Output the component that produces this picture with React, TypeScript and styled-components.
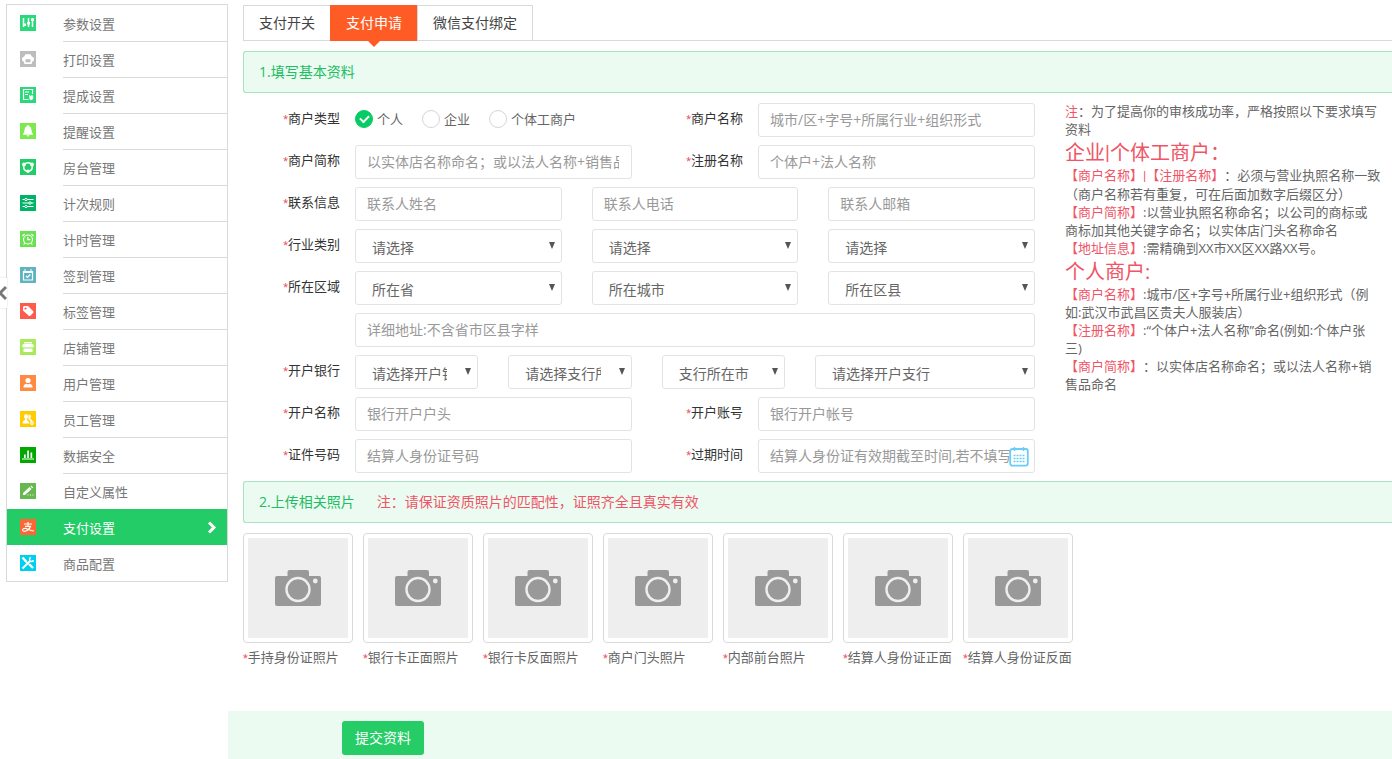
import React, { useState } from "react";
import styled, { createGlobalStyle, css } from "styled-components";

const green = "#23cc66";
const red = "#ef5566";
const line = "#d9d9d9";
const mint = "#ebfbf1";

const GlobalStyle = createGlobalStyle`
  *, *::before, *::after { box-sizing: border-box; }
  body {
    margin: 0;
    background: #fff;
    color: #666;
    font: 13px/18px "Open Sans", "Noto Sans CJK SC", sans-serif;
    text-spacing-trim: space-all;
    text-autospace: no-autospace;
    overflow-x: hidden;
  }
  input, select, button { font-family: inherit; }
`;

const Page = styled.div`
  display: flex;
  min-height: 100vh;
`;

/* ---------- sidebar ---------- */

const Sidebar = styled.nav`
  flex: none;
  width: 222px;
  margin: 4px 0 0 6px;
  align-self: flex-start;
  border: 1px solid ${line};
`;

const MenuList = styled.ul`
  margin: 0;
  padding: 0;
  list-style: none;
`;

const MenuText = styled.span<{ $ruled: boolean }>`
  flex: 1;
  height: 36px;
  padding-top: 9px;
  border-top: 1px solid ${(p) => (p.$ruled ? line : "transparent")};
`;

const MenuLink = styled.a<{ $active: boolean }>`
  position: relative;
  display: flex;
  gap: 27px;
  height: 36px;
  padding-left: 13px;
  color: #777;
  text-decoration: none;
  ${(p) =>
    p.$active &&
    css`
      background: ${green};
      color: #fff;
    `}
  > svg:first-child {
    flex: none;
    margin-top: 10px;
  }
`;

const ActiveMark = styled.svg`
  flex: none;
  margin: 12px 10px 0 0;
`;

const Collapse = styled.button`
  position: fixed;
  left: -10px;
  top: 278px;
  width: 17px;
  height: 30px;
  padding: 0;
  border: 0;
  background: #fff;
  box-shadow: 0 0 2px rgba(0, 0, 0, 0.15);
  svg {
    display: block;
    margin: 0 0 0 8px;
  }
`;

/* ---------- main column ---------- */

const Main = styled.main`
  flex: 1;
  min-width: 0;
  display: flex;
  flex-direction: column;
`;

const Content = styled.div`
  padding: 5px 0 0 15px;
`;

const Tabs = styled.div`
  display: flex;
  height: 36px;
  margin-bottom: 10px;
  border-bottom: 1px solid ${line};
`;

const Tab = styled.button<{ $active: boolean }>`
  position: relative;
  height: 36px;
  padding: 0 15px 2px;
  border: 1px solid ${line};
  border-right-width: 0;
  background: #fff;
  color: #444;
  font-size: 14px;
  &:last-child {
    border-right-width: 1px;
  }
  ${(p) =>
    p.$active &&
    css`
      border-color: #ff5c25;
      background: #ff5c25;
      color: #fff;
      &::after {
        content: "";
        position: absolute;
        top: 100%;
        left: 50%;
        margin-left: -7px;
        border: 7px solid transparent;
        border-top-color: #ff5c25;
        border-bottom-width: 0;
      }
    `}
`;

const SectionBar = styled.h2`
  display: flex;
  align-items: center;
  gap: 22px;
  height: 42px;
  margin: 0;
  padding-left: 15px;
  border: 1px solid #a9e3c0;
  border-right: 0;
  border-radius: 3px 0 0 3px;
  background: ${mint};
  color: #22bd62;
  font-size: 14px;
  font-weight: 400;
`;

const Red = styled.span`
  color: ${red};
`;

const Star = styled.span`
  color: ${red};
  font-family: Roboto, sans-serif;
  font-size: 11px;
  line-height: 1;
`;

const Apply = styled.div`
  display: grid;
  grid-template-columns: 792fr 327fr;
  gap: 30px;
  margin-top: 10px;
`;

/* ---------- form ---------- */

const Form = styled.form`
  min-width: 0;
`;

const Row = styled.div`
  display: flex;
  gap: 15px;
  margin-bottom: 8px;
`;

const Label = styled.label<{ $width: number }>`
  flex: none;
  width: ${(p) => p.$width}px;
  height: 34px;
  color: #333;
  line-height: 31px;
  text-align: right;
`;

const Fields = styled.div<{ $columns: string; $gap?: number }>`
  flex: 1;
  min-width: 0;
  display: grid;
  grid-template-columns: ${(p) => p.$columns};
  gap: ${(p) => p.$gap ?? 30}px;
`;

const control = css`
  display: block;
  width: 100%;
  min-width: 0;
  height: 34px;
  border: 1px solid #e3e3e3;
  border-radius: 3px;
  background: #fff;
  color: #666;
  font-size: 14px;
`;

const TextInput = styled.input`
  ${control}
  padding: 0 12px 2px 11px;
  &::placeholder {
    color: #999;
    opacity: 1;
  }
`;

const SelectBox = styled.div`
  position: relative;
  min-width: 0;
  svg {
    position: absolute;
    top: 13px;
    right: 7px;
    pointer-events: none;
  }
`;

const Select = styled.select`
  ${control}
  appearance: none;
  padding: 2px 30px 0 16px;
`;

const DateBox = styled.div`
  position: relative;
  min-width: 0;
  svg {
    position: absolute;
    top: 7px;
    right: 6px;
    pointer-events: none;
  }
`;

const RadioGroup = styled.div`
  display: flex;
  align-items: center;
  gap: 19px;
  height: 32px;
`;

const RadioLabel = styled.label`
  display: flex;
  align-items: center;
  gap: 4px;
  white-space: nowrap;
`;

const Radio = styled.input`
  position: relative;
  appearance: none;
  width: 18px;
  height: 18px;
  margin: 0;
  border: 1px solid #d6d6d6;
  border-radius: 50%;
  background: #fff;
  &:checked {
    border-color: #07cc66;
    background: #07cc66;
  }
  &:checked::after {
    content: "";
    position: absolute;
    left: 4px;
    top: 4px;
    width: 9px;
    height: 6px;
    border: solid #fff;
    border-width: 0 0 2px 2px;
    transform: rotate(-45deg);
  }
`;

/* ---------- notes ---------- */

const Notes = styled.aside`
  margin-top: -1px;
  padding-right: 11px;
`;

const NoteText = styled.p`
  margin: 0;
`;

const NoteTitle = styled.h3`
  margin: 0;
  padding-top: 2px;
  color: ${red};
  font-size: 20px;
  font-weight: 400;
  line-height: 26px;
`;

const Pipe = styled.span`
  font-family: Roboto, sans-serif;
`;

/* ---------- uploads ---------- */

const Uploads = styled.div`
  display: flex;
  flex-wrap: wrap;
  gap: 10px;
  padding: 10px 0 45px;
`;

const Upload = styled.label`
  width: 110px;
  white-space: nowrap;
`;

const Thumb = styled.span`
  display: flex;
  height: 110px;
  margin-bottom: 5px;
  padding: 4px;
  border: 1px solid ${line};
  border-radius: 4px;
`;

const ThumbFill = styled.span`
  flex: 1;
  display: flex;
  align-items: center;
  justify-content: center;
  background: #eee;
`;

const FileInput = styled.input`
  position: absolute;
  width: 1px;
  height: 1px;
  opacity: 0;
`;

const Footer = styled.footer`
  margin-top: auto;
  padding: 10px 0 4px 114px;
  background: ${mint};
`;

const Submit = styled.button`
  display: block;
  height: 34px;
  padding: 0 13px 2px;
  border: 0;
  border-radius: 3px;
  background: #26cc66;
  color: #fff;
  font-size: 14px;
`;

/* ---------- icons ---------- */

const stroke = { fill: "none", stroke: "#fff", strokeWidth: 1.2 };

const MENU: { text: string; color: string; glyph: React.ReactNode }[] = [
  {
    text: "参数设置",
    color: "#2ad979",
    glyph: (
      <>
        <path d="M3.500 3v9M8.500 3v9M12.500 3v9" {...stroke} strokeWidth="1.500" />
        <path d="M3 8.500h3v2.500H3zM7 7h3v2.500H7zM11 3.500h3v2.500h-3z" fill="#fff" />
      </>
    ),
  },
  {
    text: "打印设置",
    color: "#bdbdbd",
    glyph: (
      <path fillRule="evenodd" d="M5.500 3.300h5l1.500 2.400q2 .3 2 1.800v1.500q0 1-1.500 1.300L12 12q-.2 1-1 1H5q-.8 0-1-1l-.5-1.700Q2 10 2 9V7.500Q2 6 4 5.700zM5.500 8.300v3h5v-3z" fill="#fff" />
    ),
  },
  {
    text: "提成设置",
    color: "#2ad979",
    glyph: (
      <>
        <path d="M8.500 12.500H3.500v-10h9V7M5 5h4M5 7.500h3" {...stroke} />
        <path d="M9 7.500l1.500 1.500L12 8l1.200 1v3l-2.200 1.300L9.500 12z" fill="#fff" />
      </>
    ),
  },
  {
    text: "提醒设置",
    color: "#7ee84f",
    glyph: (
      <path d="M8 2q.9 0 1 1Q11.500 4 11.500 7q0 2.500 1.500 4v.8H3V11q1.500-1.500 1.500-4Q4.500 4 7 3q.1-1 1-1zM6.600 12.300h2.800q-.3 1.300-1.400 1.300t-1.400-1.300z" fill="#fff" />
    ),
  },
  {
    text: "房台管理",
    color: "#22cc66",
    glyph: (
      <>
        <circle cx="8" cy="8" r="4.300" fill="none" stroke="#fff" strokeWidth="1.600" strokeDasharray="7 2" strokeDashoffset="2" />
        <circle cx="4" cy="5.500" r="1.900" fill="#fff" />
        <circle cx="12" cy="5.500" r="1.900" fill="#fff" />
        <circle cx="8" cy="12.300" r="1.800" fill="#fff" />
      </>
    ),
  },
  {
    text: "计次规则",
    color: "#00b366",
    glyph: (
      <>
        <path d="M2.500 4.500H13.500M2.500 8H13.500M2.500 11.500H13.500" {...stroke} />
        <g fill="#00b366" stroke="#fff">
          <circle cx="6" cy="4.500" r="1.200" />
          <circle cx="10" cy="8" r="1.200" />
          <circle cx="6" cy="11.500" r="1.200" />
        </g>
      </>
    ),
  },
  {
    text: "计时管理",
    color: "#6be052",
    glyph: (
      <>
        <circle cx="8" cy="8.500" r="4.500" {...stroke} />
        <path d="M7.800 6v2.700h2.500M2.500 5l2.200-2.200M13.500 5l-2.200-2.200M4.700 12.200l-1 1.300M11.300 12.200l1 1.300" {...stroke} />
      </>
    ),
  },
  {
    text: "签到管理",
    color: "#5fb3c3",
    glyph: (
      <>
        <path d="M3.500 4.500h9v8.500h-9z" {...stroke} />
        <path d="M3 4h10v2H3zM4.500 2h1v3h-1zM10.500 2h1v3h-1z" fill="#fff" />
        <path d="M6 9l1.500 1.500L10.300 7.500" {...stroke} />
      </>
    ),
  },
  {
    text: "标签管理",
    color: "#ff5b4c",
    glyph: <path fillRule="evenodd" d="M3 4l1-1h4l5 5q1 1 0 2l-2.500 2.500q-1 1-2 0L3 7.500zM5.500 4.400a1.100 1.100 0 1 0 .01 0z" fill="#fff" />,
  },
  {
    text: "店铺管理",
    color: "#a9ea5c",
    glyph: <path d="M4 3h8v1.500H4zM3 5h10l1 2.500q-1 1.500-2 .5-1 1-2 0-1 1-2 0-1 1-2 0-1 1-2 0-1 1-2-.5zM3.500 9.500h9v3.500h-9z" fill="#fff" />,
  },
  {
    text: "用户管理",
    color: "#ff8a42",
    glyph: (
      <>
        <circle cx="8" cy="5.500" r="2.600" fill="#fff" />
        <path d="M3.500 12.500v-1.500Q4 9 6.500 8.700q1.500 1 3 0 2.500.3 3 2.300v1.500z" fill="#fff" />
      </>
    ),
  },
  {
    text: "员工管理",
    color: "#fc0",
    glyph: (
      <>
        <ellipse cx="6" cy="5.500" rx="2" ry="2.600" fill="#fff" />
        <path d="M2.500 12.500q0-3 2.500-3.500V7.500h2V9q2 1 2.500 3.500zM8.500 3.500q2.500 0 2.300 2.300 0 1.500-.8 2.200 2 .5 2.500 2l-2 .5Q10 9 8.300 8z" fill="#fff" />
        <circle cx="12" cy="12" r="1.300" {...stroke} />
      </>
    ),
  },
  {
    text: "数据安全",
    color: "#00a800",
    glyph: <path d="M2 11.500h12v1H2zM4 7.500h1.700V11H4zM7.200 3.500h1.700V11H7.200zM10.500 5.500h1.700V11h-1.700z" fill="#fff" />,
  },
  {
    text: "自定义属性",
    color: "#66b84f",
    glyph: (
      <>
        <path d="M3 10l6.500-6 2 2L5 12H3zM10.300 3.200l.9-.8 2 2-.9.9z" fill="#fff" />
        <path d="M7.500 12h1M10 12h1M12.500 12h1" {...stroke} />
      </>
    ),
  },
  {
    text: "支付设置",
    color: "#f63",
    glyph: (
      <path d="M4 5h8M8 3v4M5 7.300h5.500Q9.800 9.500 7.500 11.300q-2.500 1.500-4.500.7-1-1.300.5-2.300Q5.500 9 8 10.200q3 1.600 6 1.800" {...stroke} />
    ),
  },
  {
    text: "商品配置",
    color: "#00d0f0",
    glyph: (
      <>
        <path d="M2.500 2.500l4 4.500M9.500 9.500l3.500 3.500" {...stroke} strokeWidth="2.400" />
        <path d="M6 6.500l4 3.500" {...stroke} />
        <path d="M2.500 13.500L10.500 5.500" {...stroke} strokeWidth="2" />
        <path d="M10.500 2.200Q9 4.500 9.800 6.200 11.500 7 13.800 5.500" {...stroke} strokeWidth="1.500" />
      </>
    ),
  },
];

const Chevron = ({ flip }: { flip?: boolean }) => (
  <path d={flip ? "M8 9L2 15l6 6" : "M2 1.500L7 6.500 2 11.500"} fill="none" stroke={flip ? "#777" : "#fff"} strokeWidth="3" />
);

const Camera = () => (
  <svg width="46" height="36" viewBox="0 0 46 36" aria-hidden="true">
    <path d="M2 6H12.500V2q0-2 2-2H32q2 0 2 2v4H44q2 0 2 2V34q0 2-2 2H2q-2 0-2-2V8Q0 6 2 6z" fill="#999" />
    <circle cx="23" cy="19.500" r="11.500" fill="none" stroke="#eee" strokeWidth="2.400" />
    <circle cx="40.300" cy="11" r="2.400" fill="#eee" />
  </svg>
);

const Calendar = () => (
  <svg width="20" height="21" viewBox="0 0 20 21" aria-hidden="true">
    <rect x="1.200" y="3" width="17.600" height="16.600" rx="2" fill="none" stroke="#69cdf8" strokeWidth="1.800" />
    <path d="M5.500 1v4M14.500 1v4" stroke="#69cdf8" strokeWidth="1.500" />
    <path d="M4.500 9.500h11M4.500 12.500h11M4.500 15.500h11" stroke="#69cdf8" strokeWidth="1.600" strokeDasharray="2 1" />
  </svg>
);

/* ---------- form parts ---------- */

const FieldLabel = ({ id, text, width = 97 }: { id?: string; text: string; width?: number }) => (
  <Label as={id ? undefined : "span"} htmlFor={id} $width={width}>
    <Star>*</Star>
    {text}
  </Label>
);

const Dropdown = ({ id, name, text }: { id?: string; name: string; text: string }) => (
  <SelectBox>
    <Select id={id} aria-label={name}>
      <option>{text}</option>
    </Select>
    <svg width="6" height="7" viewBox="0 0 6 7" aria-hidden="true">
      <path d="M0 0h6L3 7z" fill="#555" />
    </svg>
  </SelectBox>
);

const PAIR = "minmax(0, 1fr) 96px minmax(0, 1fr)";
const THREE = "repeat(3, minmax(0, 1fr))";
const BANK = "repeat(3, minmax(0, 370fr)) minmax(0, 660fr)";
const TABS = ["支付开关", "支付申请", "微信支付绑定"];
const TYPES = ["个人", "企业", "个体工商户"];
const PHOTOS = ["手持身份证照片", "银行卡正面照片", "银行卡反面照片", "商户门头照片", "内部前台照片", "结算人身份证正面", "结算人身份证反面"];

export default function App() {
  const [tab, setTab] = useState("支付申请");
  const [kind, setKind] = useState("个人");
  const active = MENU.findIndex((m) => m.text === "支付设置");

  return (
    <Page>
      <GlobalStyle />
      <Sidebar aria-label="设置">
        <MenuList>
          {MENU.map((m, i) => (
            <li key={m.text}>
              <MenuLink href="#" $active={i === active}>
                <svg width="16" height="16" viewBox="0 0 16 16" aria-hidden="true">
                  <rect width="16" height="16" fill={m.color} />
                  {m.glyph}
                </svg>
                <MenuText $ruled={i > 0 && i !== active && i !== active + 1}>{m.text}</MenuText>
                {i === active && (
                  <ActiveMark width="10" height="13" viewBox="0 0 10 13" aria-hidden="true">
                    <Chevron />
                  </ActiveMark>
                )}
              </MenuLink>
            </li>
          ))}
        </MenuList>
      </Sidebar>
      <Collapse type="button" aria-label="收起菜单">
        <svg width="9" height="30" viewBox="0 0 9 30" aria-hidden="true">
          <Chevron flip />
        </svg>
      </Collapse>

      <Main>
        <Content>
          <Tabs role="tablist">
            {TABS.map((t) => (
              <Tab key={t} type="button" role="tab" aria-selected={t === tab} $active={t === tab} onClick={() => setTab(t)}>
                {t}
              </Tab>
            ))}
          </Tabs>

          <SectionBar>1.填写基本资料</SectionBar>
          <Apply>
            <Form id="apply">
              <Row>
                <FieldLabel text="商户类型" />
                <Fields $columns={PAIR} $gap={15}>
                  <RadioGroup role="radiogroup" aria-label="商户类型">
                    {TYPES.map((t) => (
                      <RadioLabel key={t}>
                        <Radio type="radio" name="kind" checked={kind === t} onChange={() => setKind(t)} />
                        {t}
                      </RadioLabel>
                    ))}
                  </RadioGroup>
                  <FieldLabel id="name" text="商户名称" width={96} />
                  <TextInput id="name" placeholder="城市/区+字号+所属行业+组织形式" />
                </Fields>
              </Row>
              <Row>
                <FieldLabel id="short" text="商户简称" />
                <Fields $columns={PAIR} $gap={15}>
                  <TextInput id="short" placeholder="以实体店名称命名；或以法人名称+销售品命名" />
                  <FieldLabel id="reg" text="注册名称" width={96} />
                  <TextInput id="reg" placeholder="个体户+法人名称" />
                </Fields>
              </Row>
              <Row>
                <FieldLabel id="contact" text="联系信息" />
                <Fields $columns={THREE}>
                  <TextInput id="contact" placeholder="联系人姓名" />
                  <TextInput aria-label="联系人电话" placeholder="联系人电话" />
                  <TextInput aria-label="联系人邮箱" placeholder="联系人邮箱" />
                </Fields>
              </Row>
              <Row>
                <FieldLabel id="trade" text="行业类别" />
                <Fields $columns={THREE}>
                  <Dropdown id="trade" name="行业类别" text="请选择" />
                  <Dropdown name="行业子类" text="请选择" />
                  <Dropdown name="行业细类" text="请选择" />
                </Fields>
              </Row>
              <Row>
                <FieldLabel id="area" text="所在区域" />
                <Fields $columns={THREE}>
                  <Dropdown id="area" name="所在省" text="所在省" />
                  <Dropdown name="所在城市" text="所在城市" />
                  <Dropdown name="所在区县" text="所在区县" />
                </Fields>
              </Row>
              <Row>
                <Label as="span" $width={97} />
                <Fields $columns="minmax(0, 1fr)">
                  <TextInput aria-label="详细地址" placeholder="详细地址:不含省市区县字样" />
                </Fields>
              </Row>
              <Row>
                <FieldLabel id="bank" text="开户银行" />
                <Fields $columns={BANK}>
                  <Dropdown id="bank" name="开户银行" text="请选择开户银行" />
                  <Dropdown name="支行所在省" text="请选择支行所在省" />
                  <Dropdown name="支行所在市" text="支行所在市" />
                  <Dropdown name="开户支行" text="请选择开户支行" />
                </Fields>
              </Row>
              <Row>
                <FieldLabel id="holder" text="开户名称" />
                <Fields $columns={PAIR} $gap={15}>
                  <TextInput id="holder" placeholder="银行开户户头" />
                  <FieldLabel id="account" text="开户账号" width={96} />
                  <TextInput id="account" placeholder="银行开户帐号" />
                </Fields>
              </Row>
              <Row>
                <FieldLabel id="idno" text="证件号码" />
                <Fields $columns={PAIR} $gap={15}>
                  <TextInput id="idno" placeholder="结算人身份证号码" />
                  <FieldLabel id="expire" text="过期时间" width={96} />
                  <DateBox>
                    <TextInput id="expire" placeholder="结算人身份证有效期截至时间,若不填写" />
                    <Calendar />
                  </DateBox>
                </Fields>
              </Row>
            </Form>

            <Notes>
              <NoteText>
                <Red>注</Red>：为了提高你的审核成功率，严格按照以下要求填写资料
              </NoteText>
              <NoteTitle>
                企业<Pipe>|</Pipe>个体工商户：
              </NoteTitle>
              <NoteText>
                <Red>
                  【商户名称】<Pipe>|</Pipe>【注册名称】
                </Red>
                ：必须与营业执照名称一致（商户名称若有重复，可在后面加数字后缀区分）
              </NoteText>
              <NoteText>
                <Red>【商户简称】</Red>:以营业执照名称命名；以公司的商标或
                <br />
                商标加其他关键字命名；以实体店门头名称命名
              </NoteText>
              <NoteText>
                <Red>【地址信息】</Red>:需精确到XX市XX区XX路XX号。
              </NoteText>
              <NoteTitle>个人商户:</NoteTitle>
              <NoteText>
                <Red>【商户名称】</Red>:城市/区+字号+所属行业+组织形式（例如:武汉市武昌区贵夫人服装店）
              </NoteText>
              <NoteText>
                <Red>【注册名称】</Red>:“个体户+法人名称”命名(例如:个体户张三)
              </NoteText>
              <NoteText>
                <Red>【商户简称】</Red>：以实体店名称命名；或以法人名称+销售品命名
              </NoteText>
            </Notes>
          </Apply>

          <SectionBar>
            <span>2.上传相关照片</span>
            <Red>注：请保证资质照片的匹配性，证照齐全且真实有效</Red>
          </SectionBar>
          <Uploads>
            {PHOTOS.map((p) => (
              <Upload key={p}>
                <FileInput type="file" accept="image/*" />
                <Thumb>
                  <ThumbFill>
                    <Camera />
                  </ThumbFill>
                </Thumb>
                <Star>*</Star>
                {p}
              </Upload>
            ))}
          </Uploads>
        </Content>
        <Footer>
          <Submit type="submit" form="apply">
            提交资料
          </Submit>
        </Footer>
      </Main>
    </Page>
  );
}
